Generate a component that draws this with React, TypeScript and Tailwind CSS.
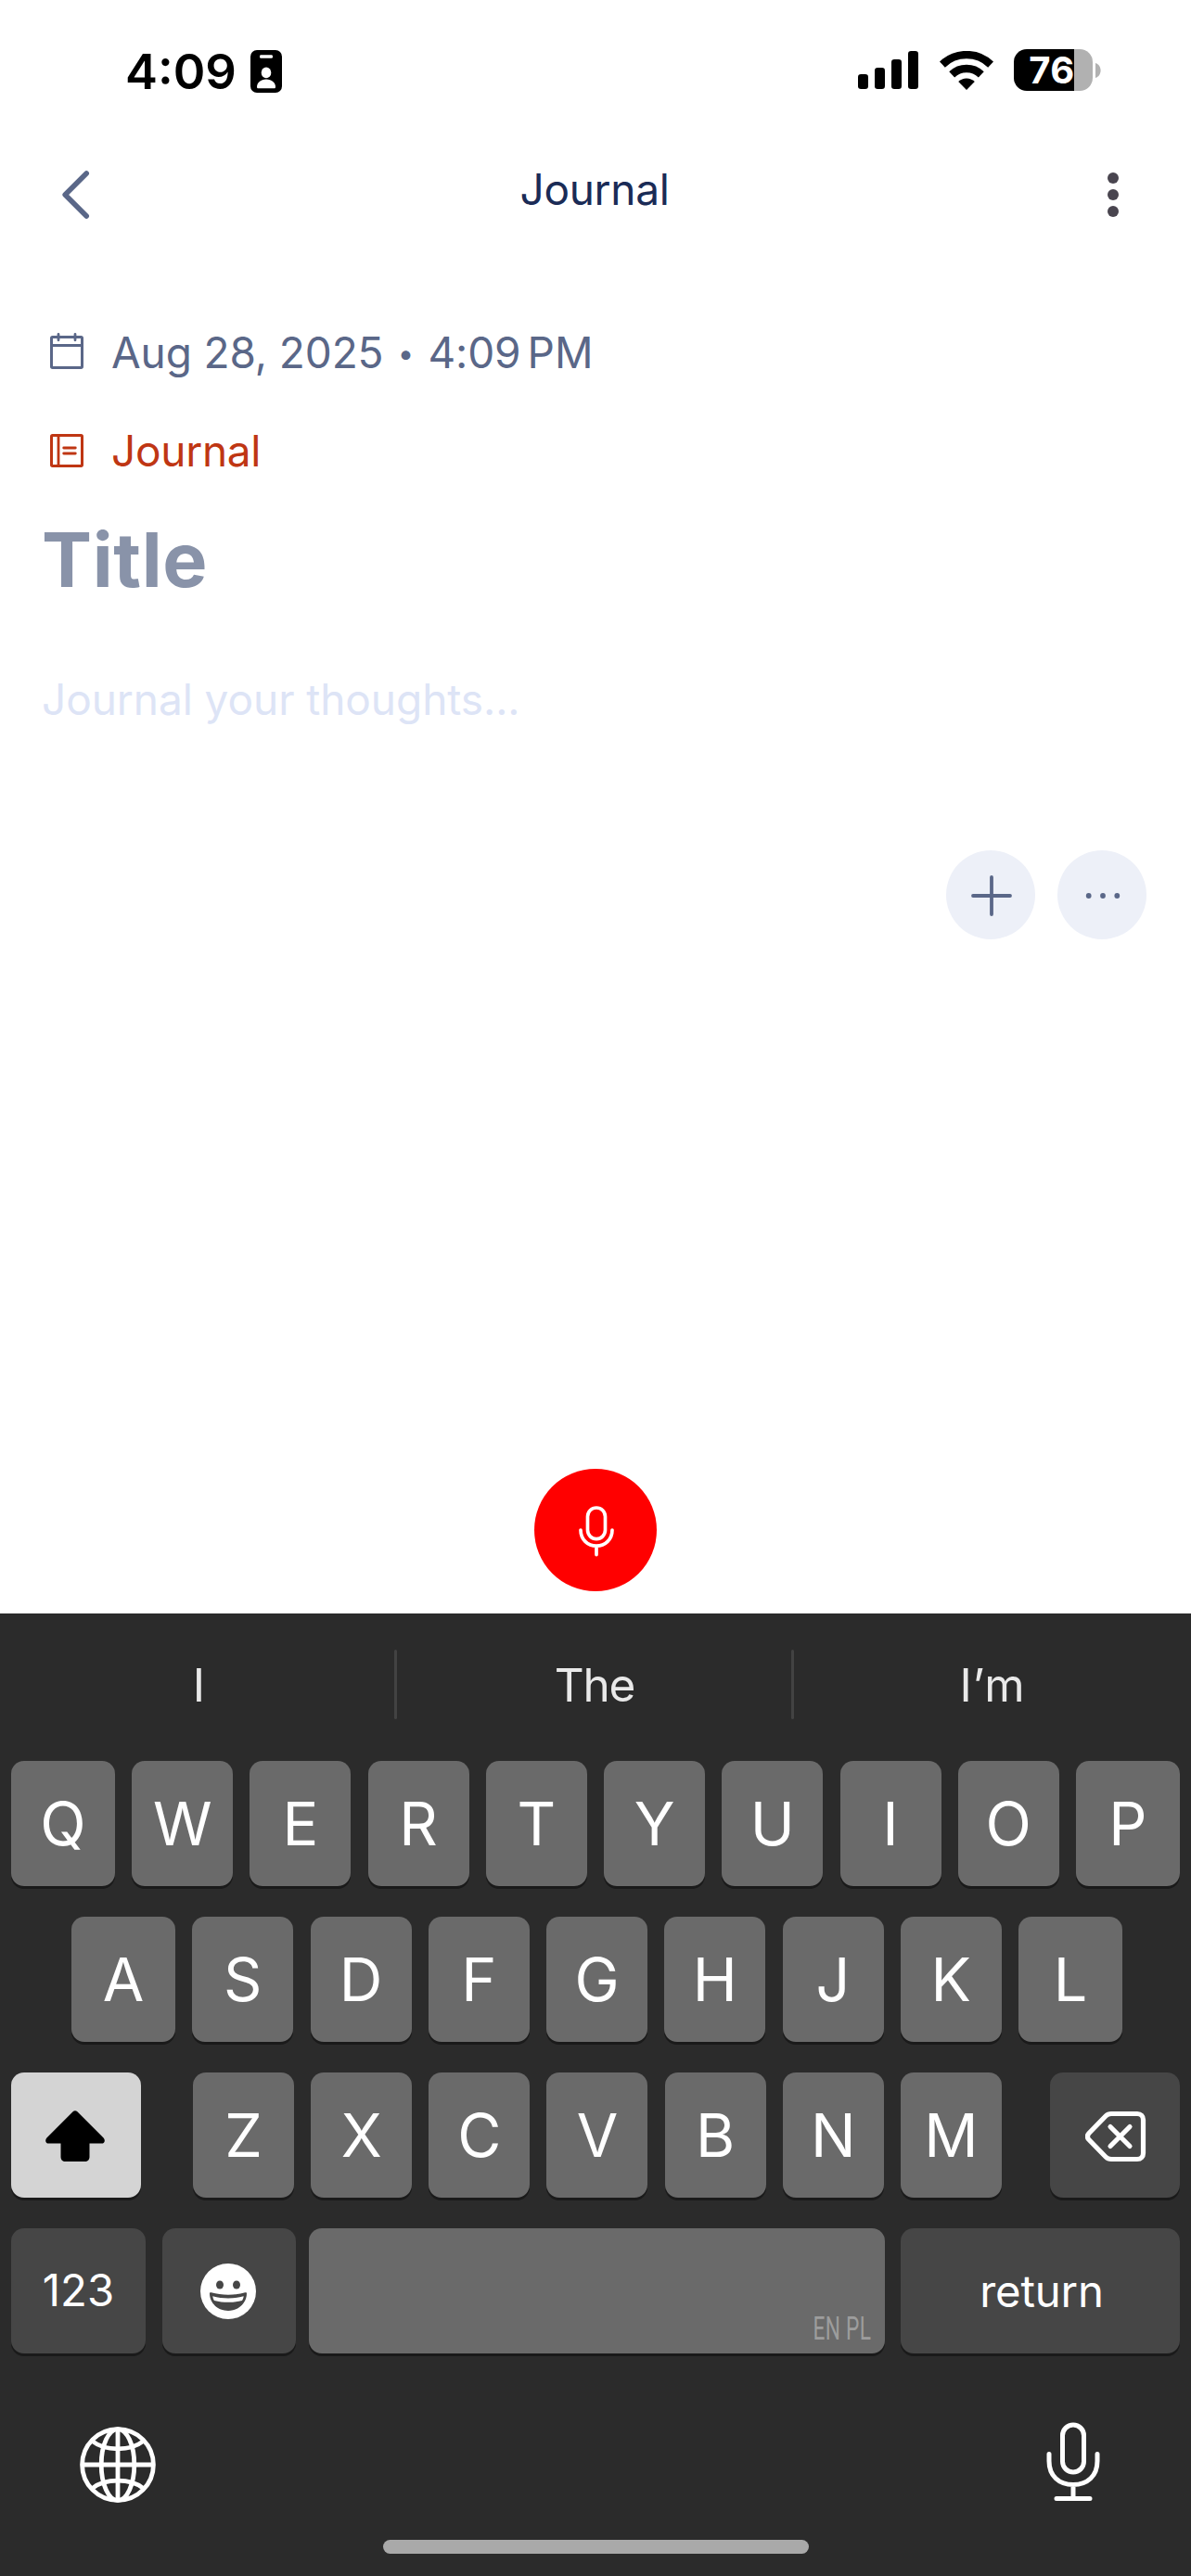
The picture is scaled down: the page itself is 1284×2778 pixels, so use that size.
import React from "react";

function StatusBar() {
  return (
    <div className="flex h-[154px] items-center justify-between pr-[97px] pl-[135px]">
      <div className="flex items-center">
        <span className="w-[135px] text-[52.5px] leading-[60px] font-semibold text-black">4:09</span>
        <svg width="34" height="46" viewBox="0 0 34 46">
          <rect width="34" height="46" rx="7" fill="#000" />
          <rect x="10" y="5.2" width="14" height="3.6" rx="1.4" fill="#fff" />
          <ellipse cx="17" cy="24.4" rx="5.3" ry="5.8" fill="#fff" />
          <path d="M7 39.5C7 35.5 11 31.5 17 31.5S27 35.5 27 39.5C27 41 26.5 41.3 25.4 41.3H8.6C7.5 41.3 7 41 7 39.5Z" fill="#fff" />
        </svg>
      </div>
      <div className="mb-[3px] flex items-center">
        <svg width="65" height="41" viewBox="0 0 65 41" fill="#000">
          <rect x="0" y="25" width="11" height="16" rx="3.2" />
          <rect x="18" y="18" width="11" height="23" rx="3.2" />
          <rect x="36" y="9" width="11" height="32" rx="3.2" />
          <rect x="54" y="0" width="11" height="41" rx="3.2" />
        </svg>
        <svg className="ml-[22.5px]" width="58" height="42" viewBox="0 0 58 42">
          <path d="M2.9 14.6A37.75 37.75 0 0 1 55.1 14.6" fill="none" stroke="#000" strokeWidth="8.5" />
          <path d="M13.2 25.4A22.9 22.9 0 0 1 44.8 25.4" fill="none" stroke="#000" strokeWidth="8.5" />
          <path d="M29 42L20.2 32.9A12.8 12.8 0 0 1 37.8 32.9Z" fill="#000" />
        </svg>
        <div className="ml-[22.5px] flex items-center">
          <div className="flex h-[45px] w-[85px] items-center justify-center rounded-[14px] bg-[linear-gradient(to_right,#000_65px,#b1b1b1_65px)] pr-[3px]">
            <span className="text-[40px] leading-[45px] font-bold tracking-[0.5px] text-white">76</span>
          </div>
          <svg className="ml-[3px]" width="6" height="16" viewBox="0 0 6 16">
            <path d="M0 0C3.5 1.2 5.6 4.4 5.6 8S3.5 14.8 0 16Z" fill="#b1b1b1" />
          </svg>
        </div>
      </div>
    </div>
  );
}

function Header() {
  return (
    <header className="flex h-[112px] items-center justify-between pr-[78px] pl-[67px]">
      <svg width="30" height="52" viewBox="0 0 30 52" fill="none" stroke="#5a6788" strokeWidth="5.6" strokeLinecap="round" strokeLinejoin="round">
        <path d="M26.2 3L3.2 26L26.2 49" />
      </svg>
      <h1 className="mr-[9px] mb-[13px] text-[46px] leading-[56px] tracking-[-0.3px] text-[#1a2b56]">Journal</h1>
      <svg width="12" height="48" viewBox="0 0 12 48" fill="#49454f">
        <circle cx="6" cy="6" r="6" />
        <circle cx="6" cy="24" r="6" />
        <circle cx="6" cy="42" r="6" />
      </svg>
    </header>
  );
}

function Entry() {
  return (
    <main className="flex grow flex-col pt-[61px]">
      <div className="flex h-[106px] items-center pl-[54px] text-[46px] text-[#5a6788]">
        <svg className="mb-[3px]" width="36" height="39" viewBox="0 0 36 39" fill="none" stroke="#5a6788" strokeWidth="3">
          <rect x="1.5" y="4.5" width="33" height="33" rx="1.2" />
          <path d="M1.5 13.5H34.5" />
          <path d="M9 1.4V7.8M27 1.4V7.8" strokeLinecap="round" strokeWidth="2.8" />
        </svg>
        <span className="ml-[30px] tracking-[-0.12px]">Aug 28, 2025</span>
        <span className="w-[48px] pt-[3px] text-center text-[31px]">•</span>
        <span className="tracking-[-0.1px]">4:09</span>
        <span className="ml-[7px]">PM</span>
      </div>
      <div className="flex h-[106px] items-center pl-[54px] text-[46px] text-[#bf3613]">
        <svg width="36" height="36" viewBox="0 0 36 36" fill="none" stroke="#bf3613" strokeWidth="3">
          <rect x="1.5" y="1.5" width="33" height="33" rx="1.2" />
          <path d="M9 1.5V34.5" strokeWidth="2.8" />
          <path d="M14.7 15H27.3M14.7 21H27.3" strokeLinecap="round" strokeWidth="2.8" />
        </svg>
        <span className="ml-[30px] tracking-[-0.3px]">Journal</span>
      </div>
      <h2 className="pl-[45px] text-[81px] leading-[131px] font-bold tracking-[0.6px] text-[#8993a9]">Title</h2>
      <p className="pl-[45px] text-[46px] leading-[169px] tracking-[-0.07px] text-[#dde4f6]">Journal your thoughts...</p>
      <div className="mt-[78px] flex justify-end gap-6 pr-12">
        <button className="flex size-24 items-center justify-center rounded-full bg-[#edf0f8]">
          <svg className="mt-0.5 ml-0.5" width="44" height="44" viewBox="0 0 44 44" stroke="#5a6788" strokeWidth="3.8" strokeLinecap="round">
            <path d="M22 2V42M2 22H42" />
          </svg>
        </button>
        <button className="flex size-24 items-center justify-center rounded-full bg-[#edf0f8]">
          <svg className="mt-0.5 ml-0.5" width="38" height="8" viewBox="0 0 38 8" fill="#5a6788">
            <circle cx="3.7" cy="4" r="2.9" />
            <circle cx="19" cy="4" r="2.9" />
            <circle cx="34.3" cy="4" r="2.9" />
          </svg>
        </button>
      </div>
      <button className="mt-auto mb-6 flex size-[132px] items-center justify-center self-center rounded-full bg-[#ff0000]">
        <svg className="mt-[2px] ml-px" width="38" height="55" viewBox="0 0 38 55" fill="none" stroke="#fff" strokeWidth="3.7" strokeLinecap="round">
          <rect x="9.5" y="2" width="19" height="33.6" rx="9.5" />
          <path d="M2 26C2 36 9.5 43.2 19 43.2S36 36 36 26M19 43.2V52.6" />
        </svg>
      </button>
    </main>
  );
}

const keyBase =
  "flex h-[135px] items-center justify-center rounded-[14px] text-white shadow-[0_3px_0_#1a1a1a]";

function LetterKey({ label, wide }: { label: string; wide?: boolean }) {
  return (
    <button className={`${keyBase} bg-[#6a6a6a] text-[64.6px] leading-[64px] ${wide ? "w-28" : "w-[109px]"}`}>
      {label}
    </button>
  );
}

function LetterRow({ letters, className }: { letters: string; className: string }) {
  return (
    <div className={`flex justify-between ${className}`}>
      {letters.split("").map((letter, i) => (
        <LetterKey key={letter} label={letter} wide={i === 0 || i === letters.length - 1} />
      ))}
    </div>
  );
}

function Keyboard() {
  return (
    <section className="flex h-[1038px] flex-col bg-[#2b2b2b]">
      <div className="flex h-[159px] items-center pb-[5px] text-[49.5px] leading-[60px] text-[#e9e9e9]">
        <span className="w-[425px] pl-[4px] text-center">I</span>
        <span className="mt-[-1px] h-[75px] w-[3px] rounded-full bg-[#424242]" />
        <span className="w-[425px] pl-[1px] text-center tracking-[-1.2px]">The</span>
        <span className="mt-[-1px] h-[75px] w-[3px] rounded-full bg-[#424242]" />
        <span className="w-[428px] text-center tracking-[0.9px]">I’m</span>
      </div>

      <div className="flex flex-col gap-[33px]">
        <LetterRow letters="QWERTYUIOP" className="px-3" />
        <LetterRow letters="ASDFGHJKL" className="pr-[74px] pl-[77px]" />

        <div className="flex justify-between px-3">
          <button className={`${keyBase} w-[140px] bg-[#d4d4d4]`}>
            <svg className="mt-[2px] mr-[3px]" width="64" height="55" viewBox="0 0 64 55">
              <path
                d="M29.6 1.2C31 -0.2 33 -0.2 34.4 1.2L62.6 29.6C65 32.2 63.6 35.6 60.6 35.6H47.5V50C47.5 53 45.5 55 42.5 55H21.5C18.5 55 16.5 53 16.5 50V35.6H3.4C0.4 35.6 -1 32.2 1.4 29.6Z"
                fill="#000"
              />
            </svg>
          </button>
          <div className="mr-[-4px] flex w-[872px] justify-between">
            {"ZXCVBNM".split("").map((letter) => (
              <LetterKey key={letter} label={letter} />
            ))}
          </div>
          <button className={`${keyBase} w-[140px] bg-[#464646]`}>
            <svg className="mt-[2px] ml-px" width="66" height="56" viewBox="0 0 66 56" fill="none" stroke="#fff" strokeWidth="5.2" strokeLinecap="round" strokeLinejoin="round">
              <path d="M28 3.5H56C60 3.5 62.5 6 62.5 10V46C62.5 50 60 52.5 56 52.5H28C25.5 52.5 23.5 51.5 22 50L4 31.5C2 29.3 2 26.7 4 24.5L22 6C23.5 4.5 25.5 3.5 28 3.5Z" />
              <path d="M27 17.5L48 38.5M48 17.5L27 38.5" />
            </svg>
          </button>
        </div>

        <div className="flex px-3">
          <button className={`${keyBase} w-[145px] bg-[#464646] text-[47.3px]`}>123</button>
          <button className={`${keyBase} ml-[18px] w-36 bg-[#464646]`}>
            <svg className="mr-[2px]" width="60" height="60" viewBox="0 0 60 60">
              <circle cx="30" cy="30" r="30" fill="#fff" />
              <ellipse cx="21" cy="23" rx="4" ry="4.6" fill="#464646" />
              <ellipse cx="39" cy="23" rx="4" ry="4.6" fill="#464646" />
              <path d="M10 32.3C10 31.3 10.8 31 11.8 31.3C23 34.6 37 34.6 48.2 31.3C49.2 31 50 31.3 50 32.3C50 42.5 41.3 51 30 51S10 42.5 10 32.3Z" fill="#464646" />
              <path d="M13.3 35.2C24 38.2 36 38.2 46.7 35.2C46.5 36.9 45.9 38.8 45 39.9C35 42.5 25 42.5 15 39.9C14.1 38.8 13.5 36.9 13.3 35.2Z" fill="#fff" />
            </svg>
          </button>
          <button className={`${keyBase} ml-[14px] w-[621px] items-end justify-end bg-[#6a6a6a] pr-[15px] pb-[5px]`}>
            <span className="origin-right scale-x-[0.64] font-['Roboto'] text-[35.5px] leading-[43px] tracking-[0.5px] text-[#9d9d9d]">
              EN PL
            </span>
          </button>
          <button className={`${keyBase} ml-[17px] w-[301px] bg-[#464646] pl-[3px] text-[47.3px] leading-[57px] tracking-[-0.15px]`}>
            return
          </button>
        </div>
      </div>

      <div className="mt-[72px] flex items-start justify-between pr-[98px] pl-[86px]">
        <svg className="mt-[7px]" width="82" height="82" viewBox="0 0 82 82" fill="none" stroke="#fff" strokeWidth="4.8">
          <circle cx="41" cy="41" r="38.4" />
          <ellipse cx="41" cy="41" rx="17.8" ry="38.4" />
          <path d="M41 2.6V79.4M2.6 41H79.4" />
          <path d="M13.5 15.5C20 20.8 30 23.8 41 23.8S62 20.8 68.5 15.5" />
          <path d="M13.5 66.5C20 61.2 30 58.2 41 58.2S62 61.2 68.5 66.5" />
        </svg>
        <svg className="mt-[2px]" width="58" height="86" viewBox="0 0 58 86" fill="none" stroke="#fff" strokeWidth="5" strokeLinecap="round">
          <rect x="17.5" y="3" width="23" height="51" rx="11.5" />
          <path d="M3 34.5V42C3 58 13.5 67.5 29 67.5S55 58 55 42V34.5M29 67.5V82.5M11 82.5H47" />
        </svg>
      </div>
      <div className="mt-auto mb-6 ml-[413px] h-[15px] w-[459px] rounded-full bg-[#a9a9a9]" />
    </section>
  );
}

export default function App() {
  return (
    <div className="flex h-[2778px] w-[1284px] flex-col overflow-hidden bg-white font-['Inter',sans-serif]">
      <StatusBar />
      <Header />
      <Entry />
      <Keyboard />
    </div>
  );
}
